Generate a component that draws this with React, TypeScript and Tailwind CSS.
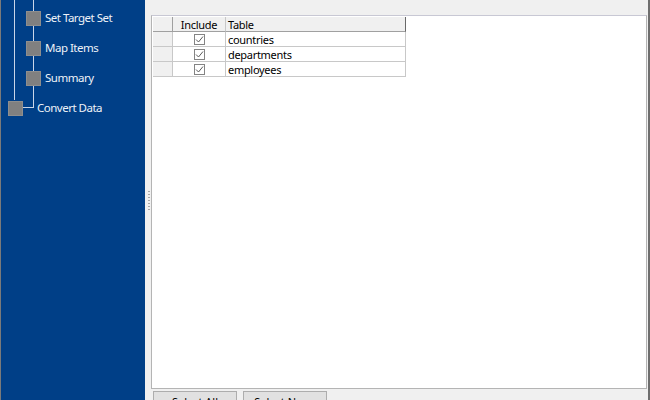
import React from 'react';

interface StepItem {
  label: string;
}

const steps: StepItem[] = [
  { label: 'Set Target Set' },
  { label: 'Map Items' },
  { label: 'Summary' },
];

const tables = ['countries', 'departments', 'employees'];

const Node = () => (
  <div className="w-[15px] h-[15px] bg-[#808080] border border-[#8e8e8e] shrink-0 relative z-10" />
);

const CheckBox = () => (
  <div className="w-[11px] h-[11px] border border-[#848484] bg-white flex items-center justify-center">
    <svg width="9" height="9" viewBox="0 0 9 9">
      <path d="M1 4.5 L3.5 7 L8 1.5" fill="none" stroke="#5a5a5a" strokeWidth="1" />
    </svg>
  </div>
);

const Sidebar = () => (
  <div className="w-[145px] h-full bg-[#003f87] border-l border-[#7a7a7a] relative shrink-0">
    {/* tree connectors */}
    <div className="absolute left-[13px] top-0 w-px h-[100px] bg-[#c9d5e8]" />
    <div className="absolute left-[32px] top-0 w-px h-[108px] bg-[#c9d5e8]" />
    <div className="absolute left-[22px] top-[107px] w-[11px] h-px bg-[#c9d5e8]" />

    <div className="flex flex-col pt-[3px]">
      {steps.map((step) => (
        <div key={step.label} className="h-[30px] flex items-center pl-[25px] gap-[4px]">
          <Node />
          <span className="text-[11.5px] tracking-[-0.5px] text-[#eef2f8]">{step.label}</span>
        </div>
      ))}
      <div className="h-[30px] flex items-center pl-[7px] gap-[14px]">
        <Node />
        <span className="text-[11.5px] tracking-[-0.5px] text-[#eef2f8]">Convert Data</span>
      </div>
    </div>
  </div>
);

const Splitter = () => (
  <div className="w-[6px] h-full bg-[#f0f0f0] flex flex-col items-center justify-center shrink-0">
    <div className="flex flex-col gap-[2px] pl-[1px]">
      {[0, 1, 2, 3, 4, 5, 6].map((i) => (
        <div key={i} className="w-[2px] h-px bg-[#a8a8a8]" />
      ))}
    </div>
  </div>
);

const TableGrid = () => (
  <div className="w-[253px] text-[11px] tracking-[-0.3px] text-black leading-none">
    <div className="flex h-[15px] bg-[#f0f0f0]">
      <div className="w-[20px] border-r border-b border-[#a0a0a0]" />
      <div className="w-[53px] border-r border-b border-[#a0a0a0] border-r-[#c8c8c8] flex items-center justify-center">
        Include
      </div>
      <div className="w-[180px] border-r border-b border-[#a0a0a0] border-r-[#696969] flex items-center pl-[2px]">
        Table
      </div>
    </div>
    {tables.map((name) => (
      <div key={name} className="flex h-[15px]">
        <div className="w-[20px] bg-[#f0f0f0] border-r border-b border-[#c8c8c8]" />
        <div className="w-[53px] bg-white border-r border-b border-[#c8c8c8] flex items-center justify-center">
          <CheckBox />
        </div>
        <div className="w-[180px] bg-white border-r border-b border-[#c8c8c8] flex items-center pl-[2px]">
          {name}
        </div>
      </div>
    ))}
  </div>
);

export default function App() {
  return (
    <div className="w-[650px] h-[400px] overflow-hidden flex bg-[#f0f0f0] font-['Noto_Sans',sans-serif]">
      <Sidebar />
      <Splitter />
      <div className="flex-1 h-full flex overflow-hidden">
        <div className="flex-1 flex flex-col pt-[15px]">
          <div className="h-[374px] shrink-0 border border-[#b4b4b4] border-t-[#c8c8d4] bg-white p-px">
            <TableGrid />
          </div>
          <div className="flex gap-[6px] pl-[2px] pt-[2px] shrink-0">
            <button className="w-[84px] h-[23px] bg-[#e1e1e1] border border-[#adadad] text-[11px] text-black">
              Select All
            </button>
            <button className="w-[84px] h-[23px] bg-[#e1e1e1] border border-[#adadad] text-[11px] text-black">
              Select None
            </button>
          </div>
        </div>
        <div className="w-px h-full bg-[#f0f0f0]" />
        <div className="w-[2px] h-full bg-[#6e6e6e]" />
      </div>
    </div>
  );
}
